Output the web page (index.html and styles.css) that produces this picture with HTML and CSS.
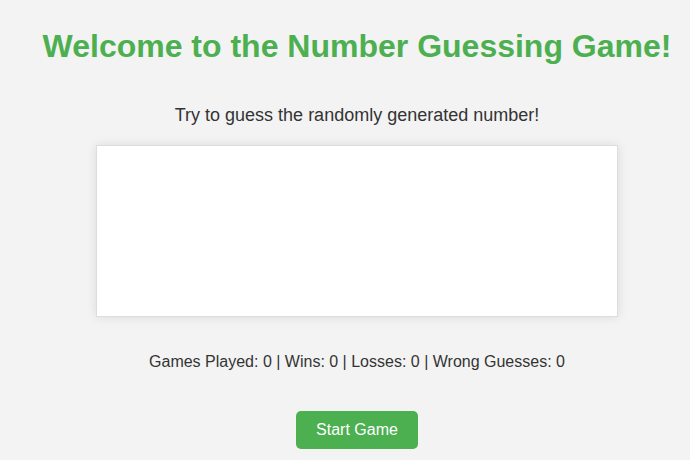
FILE: index.html
```html
<!DOCTYPE html>
<html>
<head>
<meta charset="utf-8">
<link rel="stylesheet" href="styles.css">
</head>
<body>
<div class="page">
  <h1 class="title">Welcome to the Number Guessing Game!</h1>
  <p class="intro">Try to guess the randomly generated number!</p>
  <div class="board"></div>
  <p class="stats">Games Played: 0 | Wins: 0 | Losses: 0 | Wrong Guesses: 0</p>
  <button class="start">Start Game</button>
</div>
</body>
</html>
```
FILE: styles.css
```css
html, body {
  margin: 0;
  padding: 0;
  background: #f3f3f3;
  overflow: hidden;
}
.page {
  font-family: "Liberation Sans", Arial, sans-serif;
  color: #333;
  padding: 0 0 0 24px;
  display: flex;
  flex-direction: column;
  align-items: center;
}
.title {
  margin: 27px 0 0;
  font-size: 32px;
  line-height: 38px;
  font-weight: bold;
  color: #4caf50;
  white-space: nowrap;
}
.intro {
  margin: 39px 0 0;
  font-size: 18px;
  line-height: 22px;
}
.board {
  margin-top: 19px;
  width: 522px;
  height: 172px;
  box-sizing: border-box;
  background: #fff;
  border: 1px solid #ddd;
  box-shadow: 0 0 10px rgba(0,0,0,0.1);
}
.stats {
  margin: 35px 0 0;
  font-size: 16px;
  line-height: 20px;
}
.start {
  margin-top: 39px;
  width: 122px;
  height: 38px;
  background: #4caf50;
  color: #fff;
  border: none;
  border-radius: 5px;
  font-family: "Liberation Sans", Arial, sans-serif;
  font-size: 16px;
  padding: 0;
}
```
